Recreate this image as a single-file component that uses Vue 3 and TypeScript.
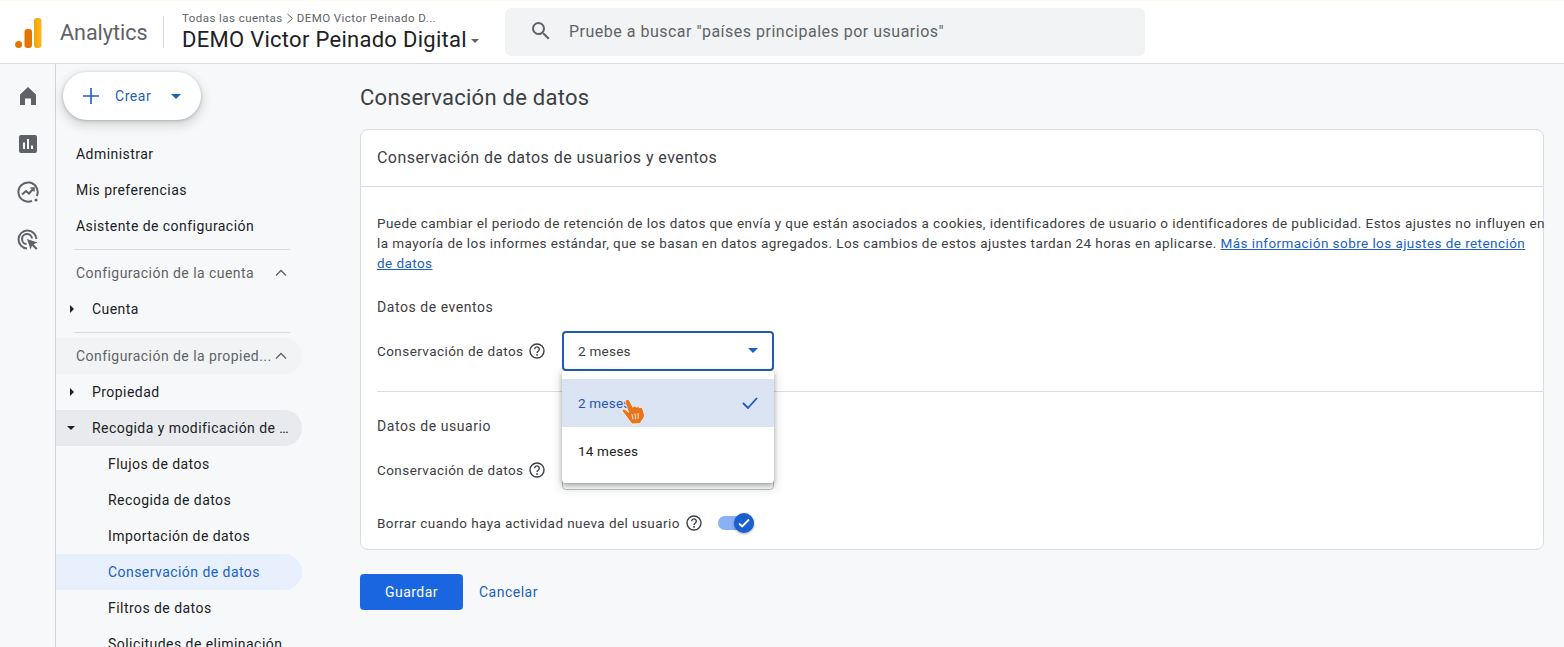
<script setup lang="ts">
interface NavItem { label: string; cls: string; caret?: string }
const nav: NavItem[] = [
  { label: 'Flujos de datos', cls: 'sub' },
  { label: 'Recogida de datos', cls: 'sub' },
  { label: 'Importación de datos', cls: 'sub' },
  { label: 'Conservación de datos', cls: 'sub active' },
  { label: 'Filtros de datos', cls: 'sub' },
  { label: 'Solicitudes de eliminación', cls: 'sub' },
]
</script>

<template>
  <div class="page">
    <header class="top">
      <svg class="logo" width="28" height="32" viewBox="0 0 28 32">
        <defs>
          <linearGradient id="gbar" x1="0" y1="0" x2="1" y2="0"><stop offset="0" stop-color="#f7a400" /><stop offset="1" stop-color="#fbb829" /></linearGradient>
        </defs>
        <rect x="19" y="1" width="7.500" height="30" rx="3" fill="url(#gbar)" />
        <rect x="9.500" y="12" width="7.500" height="19" rx="3" fill="#e37400" />
        <circle cx="3.600" cy="27.500" r="3.500" fill="#e37400" />
      </svg>
      <span class="brand">Analytics</span>
      <span class="vsep"></span>
      <div class="crumbs">
        <div class="crumb">Todas las cuentas <svg width="8" height="11" viewBox="0 0 8 11"><path d="M1.500 1l5 4.500-5 4.500" fill="none" stroke="#5f6368" stroke-width="1" /></svg> DEMO Victor Peinado D...</div>
        <div class="prop">DEMO Victor Peinado Digital<i class="tri small"></i></div>
      </div>
      <div class="search">
        <svg width="24" height="24" viewBox="0 0 24 24"><path fill="#5f6368" d="M15.500 14h-.79l-.28-.27A6.470 6.470 0 0 0 16 9.500 6.500 6.500 0 1 0 9.500 16c1.610 0 3.090-.59 4.230-1.570l.27.28v.79l5 4.990L20.490 19l-4.990-5zm-6 0C7.010 14 5 11.990 5 9.500S7.010 5 9.500 5 14 7.010 14 9.500 11.990 14 9.500 14z" /></svg>
        <span>Pruebe a buscar "países principales por usuarios"</span>
      </div>
    </header>

    <div class="body">
      <aside class="rail">
        <svg width="24" height="24" viewBox="0 0 24 24"><path fill="#5f6368" d="M4 21V10.500L12 3l8 7.500V21h-5v-6.500H9V21z" /></svg>
        <svg width="24" height="24" viewBox="0 0 24 24"><path fill="#5f6368" fill-rule="evenodd" d="M5 3h14a2 2 0 0 1 2 2v14a2 2 0 0 1-2 2H5a2 2 0 0 1-2-2V5a2 2 0 0 1 2-2zm2 7.500V17h2v-6.500zM11 7v10h2V7zm4 6.500V17h2v-3.500z" /></svg>
        <svg width="24" height="24" viewBox="0 0 24 24" fill="none" stroke="#5f6368" stroke-width="2"><path d="M20.800 16A9.600 9.600 0 1 0 16 20.800" /><path d="M6 14.500l4-3.500 3 2.500 4.500-5" /><path d="M14.500 8h3.500v3.500" stroke-width="1.600" /><circle cx="20" cy="20" r="1.500" fill="#5f6368" stroke="none" /></svg>
        <svg width="24" height="24" viewBox="0 0 24 24" fill="none" stroke="#5f6368" stroke-width="2"><path d="M11 20.500A9 9 0 1 1 20.500 11" /><path d="M10.500 16a5 5 0 1 1 5.500-5.500" /><path fill="#5f6368" stroke="none" d="M11 11l10.500 3.500-4 1.800 4 4-1.500 1.500-4-4-1.500 3.700z" /></svg>
      </aside>

      <nav class="side">
        <button class="create">
          <svg width="18" height="18" viewBox="0 0 18 18"><path d="M9 1v16M1 9h16" stroke="#1a5fc4" stroke-width="1.600" /></svg>
          <span>Crear</span>
          <i class="tri blue"></i>
        </button>
        <div class="list">
          <div class="item top-item">Administrar</div>
          <div class="item top-item">Mis preferencias</div>
          <div class="item top-item">Asistente de configuración</div>
          <div class="rule first"></div>
          <div class="item head">Configuración de la cuenta<svg class="chev" width="12" height="8" viewBox="0 0 12 8"><path d="M1 6.500l5-5 5 5" fill="none" stroke="#5f6368" stroke-width="1.400" /></svg></div>
          <div class="item lvl"><i class="arrow-r"></i>Cuenta</div>
          <div class="rule second"></div>
          <div class="item head pill">Configuración de la propied...<svg class="chev" width="12" height="8" viewBox="0 0 12 8"><path d="M1 6.500l5-5 5 5" fill="none" stroke="#5f6368" stroke-width="1.400" /></svg></div>
          <div class="item lvl"><i class="arrow-r"></i>Propiedad</div>
          <div class="item lvl pill dark"><i class="arrow-d"></i>Recogida y modificación de …</div>
          <div v-for="n in nav" :key="n.label" class="item" :class="n.cls">{{ n.label }}</div>
        </div>
      </nav>

      <main class="main">
        <h1>Conservación de datos</h1>
        <section class="card">
          <div class="card-head">Conservación de datos de usuarios y eventos</div>
          <div class="card-body">
            <p class="para">Puede cambiar el periodo de retención de los datos que envía y que están asociados a cookies, identificadores de usuario o identificadores de publicidad. Estos ajustes no influyen en<br />la mayoría de los informes estándar, que se basan en datos agregados. Los cambios de estos ajustes tardan 24 horas en aplicarse. <a>Más información sobre los ajustes de retención<br />de datos</a></p>
            <div class="sec">Datos de eventos</div>
            <div class="row">
              <span class="lab">Conservación de datos</span>
              <svg class="help" width="18" height="18" viewBox="0 0 18 18"><circle cx="9" cy="9" r="7" fill="none" stroke="#3c4043" stroke-width="1.400" /><path d="M6.700 7.200a2.300 2.300 0 1 1 3.700 1.800c-.9.600-1.400 1-1.400 2" fill="none" stroke="#3c4043" stroke-width="1.400" /><circle cx="9" cy="12.900" r=".9" fill="#3c4043" /></svg>
              <div class="select open">2 meses<i class="tri blue sel-tri"></i></div>
            </div>
            <div class="divider"></div>
            <div class="sec user">Datos de usuario</div>
            <div class="row second-row">
              <span class="lab">Conservación de datos</span>
              <svg class="help" width="18" height="18" viewBox="0 0 18 18"><circle cx="9" cy="9" r="7" fill="none" stroke="#3c4043" stroke-width="1.400" /><path d="M6.700 7.200a2.300 2.300 0 1 1 3.700 1.800c-.9.600-1.400 1-1.400 2" fill="none" stroke="#3c4043" stroke-width="1.400" /><circle cx="9" cy="12.900" r=".9" fill="#3c4043" /></svg>
              <div class="select closed"></div>
            </div>
            <div class="row toggle-row">
              <span class="lab">Borrar cuando haya actividad nueva del usuario</span>
              <svg class="help" width="18" height="18" viewBox="0 0 18 18"><circle cx="9" cy="9" r="7" fill="none" stroke="#3c4043" stroke-width="1.400" /><path d="M6.700 7.200a2.300 2.300 0 1 1 3.700 1.800c-.9.600-1.400 1-1.400 2" fill="none" stroke="#3c4043" stroke-width="1.400" /><circle cx="9" cy="12.900" r=".9" fill="#3c4043" /></svg>
              <div class="toggle">
                <span class="knob"><svg width="14" height="14" viewBox="0 0 14 14"><path d="M2 7.500l3.200 3L12 3.500" fill="none" stroke="#fff" stroke-width="1.800" /></svg></span>
              </div>
            </div>
          </div>
        </section>
        <div class="actions">
          <button class="save">Guardar</button>
          <button class="cancel">Cancelar</button>
        </div>

        <div class="menu">
          <div class="opt sel">2 meses
            <svg class="check" width="18" height="14" viewBox="0 0 18 14"><path d="M2 7l5 5L16 2" fill="none" stroke="#1f57b5" stroke-width="1.800" /></svg>
          </div>
          <div class="opt">14 meses</div>
          <svg class="hand" width="28" height="28" viewBox="0 0 25 27">
            <path d="M4.500 2.500c1-1.500 3-1.500 3.800.2L11.500 9c.5-1.500 2.500-1.500 3.200 0 .8-1.200 2.600-1 3.200.5.800-.8 2.600-.5 3 1l1.600 5.500c.3 2-.5 3.700-2 5l-2 3.500-8 .5-3-4L1.500 13c-.8-1.500.8-3 2.300-2l3.500 3L4.300 5c-.3-1-.1-1.900.2-2.500z" fill="#e8741c" stroke="#fff" stroke-width=".7" />
            <path d="M10.500 15.500l1 5M13.500 15l.5 5.500M16.500 14.500l0 5.500" stroke="#fde3c9" stroke-width="1.100" />
          </svg>
        </div>
      </main>
    </div>
  </div>
</template>

<style>
html, body { margin: 0; padding: 0; overflow: hidden; }
</style>

<style scoped>
* { box-sizing: border-box; }
.page {
  width: 1564px; height: 647px; overflow: hidden; background: #f7f8f9;
  font-family: Roboto, "Liberation Sans", sans-serif; color: #202124; font-size: 14px;
  display: flex; flex-direction: column;
}
.top {
  height: 64px; flex: none; background: #fff; border-bottom: 1px solid #dadce0;
  border-top: 1px solid #fffbee;
  display: flex; align-items: center;
}
.logo { margin-left: 15px; margin-top: 1px; }
.brand { margin-left: 17px; font-size: 21.500px; color: #5f6368; width: 87px; flex: none; letter-spacing: 0; }
.vsep { width: 1px; height: 32px; background: #dadce0; margin-left: 16px; }
.crumbs { margin-left: 18px; width: 323px; flex: none; }
.crumb { font-size: 11.500px; color: #5f6368; line-height: 15px; letter-spacing: .45px; display: flex; align-items: center; gap: 3px; white-space: nowrap; margin-top: -1px; }
.prop { font-size: 22px; line-height: 27px; margin-top: 0; color: #202124; white-space: nowrap; letter-spacing: .28px; display: flex; align-items: center; }
.search {
  width: 640px; height: 48px; background: #f1f3f4; border-radius: 6px; margin-left: 0;
  display: flex; align-items: center; padding: 0 0 2px 24px; gap: 16px; color: #5f6368; font-size: 16px; letter-spacing: .5px; margin-top: 0;
}
.tri { display: inline-block; width: 0; height: 0; border-left: 5px solid transparent; border-right: 5px solid transparent; border-top: 5px solid #5f6368; }
.tri.small { margin-left: 4px; margin-top: 3px; border-left-width: 4.500px; border-right-width: 4.500px; border-top-width: 4px; }
.tri.blue { border-top-color: #1a5fc4; border-left-width: 5.500px; border-right-width: 5.500px; }
.body { flex: 1; display: flex; min-height: 0; }
.rail {
  width: 56px; flex: none; border-right: 1px solid #d0d2d5;
  display: flex; flex-direction: column; align-items: center; padding: 20px 0 0 0; gap: 24px;
}
.side { width: 246px; flex: none; display: flex; flex-direction: column; }
.create {
  margin: 8px 0 0 7px; width: 138px; height: 48px; border-radius: 24px; border: 0; background: #fff;
  box-shadow: 0 1px 3px rgba(60,64,67,.3), 0 4px 8px 3px rgba(60,64,67,.15);
  display: flex; align-items: center; padding: 0 0 0 19px; font-family: inherit; font-size: 14px; color: #1a5fc4; flex: none;
}
.create span { margin-left: 15px; margin-right: 20px; letter-spacing: .55px; }
.list { margin-top: 16px; display: flex; flex-direction: column; }
.item { height: 36px; flex: none; display: flex; align-items: center; padding-left: 20px; white-space: nowrap; letter-spacing: .45px; position: relative; color: #202124; }
.rule { height: 1px; background: #dadce0; margin: 0 12px 0 18px; flex: none; width: 216px; }
.rule.first { margin-top: 5px; margin-bottom: 5px; }
.rule.second { margin-top: 5px; margin-bottom: 5px; }
.head { color: #5f6368; }
.chev { position: absolute; left: 219px; top: 14px; }
.pill { border-radius: 0 18px 18px 0; background: #f1f3f4; }
.pill.dark { background: #e8eaed; }
.lvl { padding-left: 36px; }
.arrow-r, .arrow-d { position: absolute; width: 0; height: 0; }
.arrow-r { left: 14px; top: 14px; border-top: 4px solid transparent; border-bottom: 4px solid transparent; border-left: 4px solid #202124; }
.arrow-d { left: 11px; top: 16px; border-left: 4px solid transparent; border-right: 4px solid transparent; border-top: 4px solid #202124; }
.sub { padding-left: 52px; }
.active { background: #e8f0fe; color: #1a5fc4; border-radius: 0 18px 18px 0; }
.main { flex: 1; padding-left: 58px; position: relative; min-width: 0; }
h1 { margin: 0; font-size: 22px; font-weight: 400; line-height: 28px; padding-top: 20px; height: 65px; color: #3c4043; letter-spacing: .26px; }
.card { width: 1184px; height: 421px; background: #fff; border: 1px solid #dadce0; border-radius: 8px; }
.card-head { height: 57px; border-bottom: 1px solid #dadce0; padding: 0 0 1px 16px; display: flex; align-items: center; font-size: 16px; color: #3c4043; letter-spacing: .45px; }
.card-body { padding: 26px 0 0 16px; position: relative; }
.para { margin: 0; width: 1167px; font-size: 13.500px; line-height: 20px; color: #3c4043; letter-spacing: .43px; white-space: nowrap; }
.para a { color: #1a5fc4; text-decoration: underline; }
.sec { font-size: 14px; color: #3c4043; letter-spacing: .55px; line-height: 20px; margin-top: 24px; font-weight: 400; }
.row { display: flex; align-items: center; margin-top: 14px; height: 40px; }
.lab { font-size: 13.500px; color: #3c4043; letter-spacing: .43px; white-space: nowrap; }
.help { margin-left: 5px; flex: none; }
.select { position: absolute; left: 201px; width: 212px; height: 40px; border-radius: 4px; background: #fff; display: flex; align-items: center; padding-left: 14px; font-size: 13.500px; letter-spacing: .25px; color: #3c4043; }
.select.open { border: 2px solid #1f5cb8; }
.select.closed { border: 1px solid #bdc1c6; }
.sel-tri { position: absolute; right: 14px; top: 15px; }
.divider { height: 1px; background: #dadce0; margin: 20px 0 0 0; }
.sec.user { margin-top: 24px; }
.second-row { margin-top: 14px; }
.toggle-row { margin-top: 13px; }
.toggle { position: relative; width: 36px; height: 14px; background: #8ab0f5; border-radius: 7px; margin-left: 15px; }
.knob { position: absolute; right: 0; top: -3px; width: 20px; height: 20px; border-radius: 50%; background: #1a5fd0; display: flex; align-items: center; justify-content: center; box-shadow: 0 1px 3px rgba(0,0,0,.35); }
.actions { display: flex; align-items: center; margin-top: 24px; }
.save { width: 103px; height: 36px; background: #1a66e0; color: #fff; border: 0; border-radius: 4px; font: inherit; letter-spacing: .45px; }
.cancel { border: 0; background: none; color: #1a5fc4; font: inherit; letter-spacing: .5px; margin-left: 16px; padding: 0; }
.menu {
  position: absolute; left: 260px; top: 307px; width: 212px; height: 112px; background: #fff; border-radius: 0 0 4px 4px; padding-top: 8px;
  box-shadow: 0 2px 4px rgba(60,64,67,.35), 0 4px 10px 2px rgba(60,64,67,.18);
}
.opt { height: 48px; display: flex; align-items: center; padding-left: 16px; font-size: 13.500px; letter-spacing: .2px; color: #202124; position: relative; }
.opt.sel { background: #dae4f2; color: #1f57b5; }
.check { position: absolute; right: 15px; top: 17px; }
.hand { position: absolute; left: 58px; top: 27px; }
</style>
